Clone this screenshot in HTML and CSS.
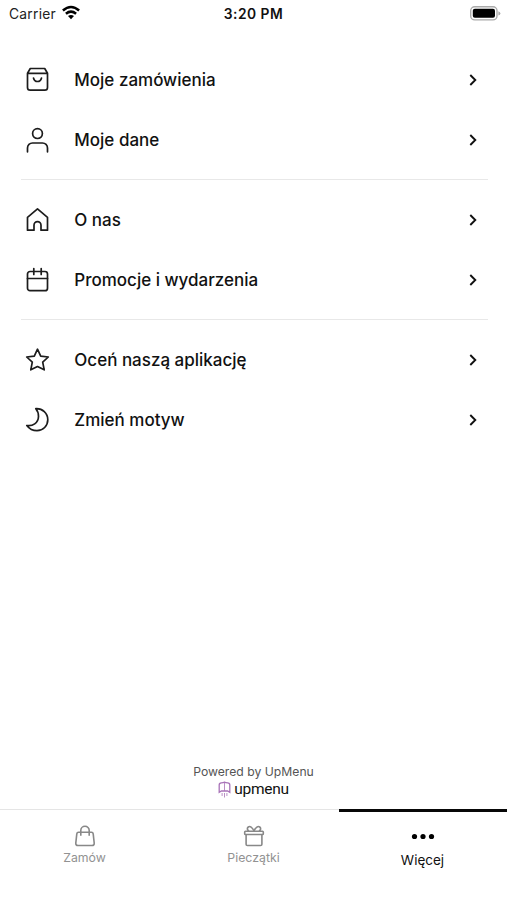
FILE: index.html
```html
<!DOCTYPE html>
<html lang="pl">
<head>
<meta charset="utf-8">
<title>Więcej</title>
<link rel="stylesheet" href="styles.css">
</head>
<body>
<div class="app">
  <header class="status">
    <div class="carrier"><span class="carrier-name">Carrier</span>
      <svg class="wifi" width="20" height="15" viewBox="0 0 20 15"><g fill="none" stroke="#000" stroke-width="2.5"><path d="M1.900 5.500Q10-1.600 18.100 5.500"/><path d="M4.900 8.800Q10 4.500 15.100 8.800"/></g><path d="M7 11.100Q10 8.800 13 11.100L10 14.200Z"/></svg>
    </div>
    <div class="time">3:20 PM</div>
    <div class="battery">
      <svg width="31" height="15" viewBox="0 0 31 15"><rect x=".7" y=".7" width="26.300" height="13.200" rx="4" fill="#fff" stroke="#aaa" stroke-width="1.400"/><rect x="2.800" y="2.800" width="22.200" height="9" rx="2" fill="#000"/><path d="M28.400 5.200q2 .7 2 2.200t-2 2.200z" fill="#aaa"/></svg>
    </div>
  </header>

  <main class="menu">
    <section class="group">
      <a class="row">
        <svg class="icon" viewBox="-.5 0 26 26"><path d="M5.800 1.500h14.400L23 6.200v14.300a2.700 2.700 0 0 1-2.700 2.700H5.700A2.700 2.700 0 0 1 3 20.500V6.200ZM3 6.400h20M9 11q.8 3.500 4 3.500t4-3.500"/></svg>
        <span class="label">Moje zamówienia</span>
        <svg class="chevron" viewBox="0 0 8 12"><path d="m1.300 1 5 5-5 5"/></svg>
      </a>
      <a class="row">
        <svg class="icon" viewBox="-.5 0 26 26"><circle cx="13" cy="6.600" r="4.900"/><path d="M3 24.800V21a5 5 0 0 1 5-5h10a5 5 0 0 1 5 5v3.800"/></svg>
        <span class="label">Moje dane</span>
        <svg class="chevron" viewBox="0 0 8 12"><path d="m1.300 1 5 5-5 5"/></svg>
      </a>
    </section>
    <section class="group">
      <a class="row">
        <svg class="icon" viewBox="-.5 0 26 26"><path d="M3 10.300 13 1.900l10 8.400v12.900h-6.500v-5a3.500 3.500 0 0 0-7 0v5H3Z"/></svg>
        <span class="label">O nas</span>
        <svg class="chevron" viewBox="0 0 8 12"><path d="m1.300 1 5 5-5 5"/></svg>
      </a>
      <a class="row">
        <svg class="icon" viewBox="-.5 0 26 26"><rect x="3" y="4.500" width="20" height="19.200" rx="2.500"/><path d="M3 11.500h20M9.300 1.500v6M16.700 1.500v6"/></svg>
        <span class="label">Promocje i wydarzenia</span>
        <svg class="chevron" viewBox="0 0 8 12"><path d="m1.300 1 5 5-5 5"/></svg>
      </a>
    </section>
    <section class="group">
      <a class="row">
        <svg class="icon" viewBox="-.5 0 26 26"><path d="m13 2.200 3.200 6.900 7.600.9-5.600 5.200 1.500 7.600-6.700-3.300-6.700 3.300 1.500-7.600L2.200 10l7.600-.9Z"/></svg>
        <span class="label">Oceń naszą aplikację</span>
        <svg class="chevron" viewBox="0 0 8 12"><path d="m1.300 1 5 5-5 5"/></svg>
      </a>
      <a class="row">
        <svg class="icon" viewBox="-.5 0 26 26"><path d="M11.300 1.700C18 1.200 23.300 6.500 23.300 12.800c0 6-4.800 10.900-10.800 10.900-4.200 0-7.800-2-10.200-5.200C8 19.600 13.800 16 14 9.500c.1-2.800-.9-5.700-2.700-7.800Z"/></svg>
        <span class="label">Zmień motyw</span>
        <svg class="chevron" viewBox="0 0 8 12"><path d="m1.300 1 5 5-5 5"/></svg>
      </a>
    </section>
  </main>

  <footer class="powered">
    <div class="powered-text">Powered by UpMenu</div>
    <div class="brand">
      <svg width="13" height="17" viewBox="0 0 13 17" fill="none" stroke="#a873b8" stroke-width="1.300"><path d="M1.200 11.300V3.900Q1.200 2.100 3.300 1.900 5.500 1.700 6.500 1.200 7.500 1.700 9.700 1.900q2.100.2 2.100 2v7.400L9.600 10H3.400Z"/><path d="M6.500 1.200V10M4.100 12v3M6.500 12v4.500M8.900 12v3" stroke-width=".8"/></svg>
      <span class="brand-name">upmenu</span>
    </div>
  </footer>

  <nav class="tabs">
    <a class="tab">
      <svg class="tab-icon" viewBox="0 0 22 22"><path d="M4.500 7.300h13q1.500 0 1.700 1.500l1 9.200q.2 2.500-2.200 2.500H4q-2.400 0-2.200-2.500l1-9.200q.2-1.500 1.700-1.500ZM6.800 10.800V5.500a4.200 4.200 0 0 1 8.400 0v5.300"/></svg>
      <span class="tab-label">Zamów</span>
    </a>
    <a class="tab">
      <svg class="tab-icon" viewBox="0 0 22 22"><rect x="1.700" y="6.300" width="18.600" height="3.200" rx=".8"/><path d="M3.100 9.500v9.700q0 1.300 1.300 1.300h13.200q1.300 0 1.300-1.300V9.500M11 6C9.200 2 7 .8 5.300 2S4.500 5.500 6 6.200M11 6c1.800-4 4-5.200 5.700-4s.8 3.500-.7 4.200"/></svg>
      <span class="tab-label">Pieczątki</span>
    </a>
    <a class="tab active">
      <svg width="24" height="22" viewBox="0 0 24 22"><circle cx="3.500" cy="11.500" r="2.600"/><circle cx="12" cy="11.500" r="2.600"/><circle cx="20.500" cy="11.500" r="2.600"/></svg>
      <span class="tab-label">Więcej</span>
    </a>
  </nav>
</div>
</body>
</html>
```
FILE: styles.css
```css
* { box-sizing: border-box; }
body {
  margin: 0;
  background: #fff;
  color: #111;
  font-family: Inter, "Liberation Sans", sans-serif;
}
.app {
  display: flex;
  flex-direction: column;
  height: 900px;
  overflow: hidden;
}
.status {
  display: grid;
  grid-template-columns: 1fr auto 1fr;
  align-items: center;
  height: 27px;
  padding: 0 6px 0 9px;
}
.carrier { display: flex; align-items: center; gap: 5px; }
.carrier-name {
  font-size: 13.800px;
  line-height: 18px;
  letter-spacing: .25px;
  color: #222;
}
.wifi { margin-top: -2px; }
.time {
  margin-left: -3px;
  font-size: 13.800px;
  font-weight: 600;
  line-height: 18px;
  letter-spacing: .5px;
}
.battery { display: flex; justify-content: flex-end; }
.menu { padding: 23px 19px 0 21px; }
.group { padding: 10px 0 9px; }
.group:first-child { padding-top: 0; }
.group + .group { border-top: 1px solid #e8e8e8; }
.row {
  display: flex;
  align-items: center;
  height: 60px;
  padding: 0 11px 0 3px;
}
.icon {
  width: 26px;
  height: 26px;
  fill: none;
  stroke: #1c1c1c;
  stroke-width: 1.700;
  stroke-linejoin: round;
  stroke-linecap: round;
}
.label {
  margin-left: 24.300px;
  font-size: 17px;
  font-weight: 500;
  line-height: 24px;
  white-space: nowrap;
}
.chevron {
  width: 8px;
  height: 12px;
  margin-left: auto;
  fill: none;
  stroke: #111;
  stroke-width: 1.900;
}
.powered {
  display: flex;
  flex-direction: column;
  align-items: center;
  margin-top: auto;
  padding-bottom: 11px;
}
.powered-text {
  margin-bottom: 1px;
  font-size: 12.200px;
  line-height: 16px;
  color: #555;
}
.brand { display: flex; align-items: center; gap: 3px; height: 17px; }
.brand-name {
  font-family: Roboto, sans-serif;
  font-size: 15.500px;
  line-height: 17px;
  letter-spacing: -.3px;
  color: #111;
}
.tabs {
  display: grid;
  grid-template-columns: repeat(3, 1fr);
  height: 91px;
  border-top: 1px solid #e5e5e5;
}
.tab {
  display: flex;
  flex-direction: column;
  align-items: center;
  padding-top: 15px;
  color: #929292;
}
.tab-icon {
  width: 22px;
  height: 22px;
  fill: none;
  stroke: #888;
  stroke-width: 1.600;
}
.tab-label { margin-top: 3px; font-size: 12.300px; line-height: 16px; }
.tab.active {
  margin: -1px 0 0;
  margin-left: 1px;
  padding: 13px 1px 0 0;
  border-top: 3px solid #080808;
  color: #111;
}
.tab.active .tab-label { margin-top: 5px; font-size: 13.500px; }
```
